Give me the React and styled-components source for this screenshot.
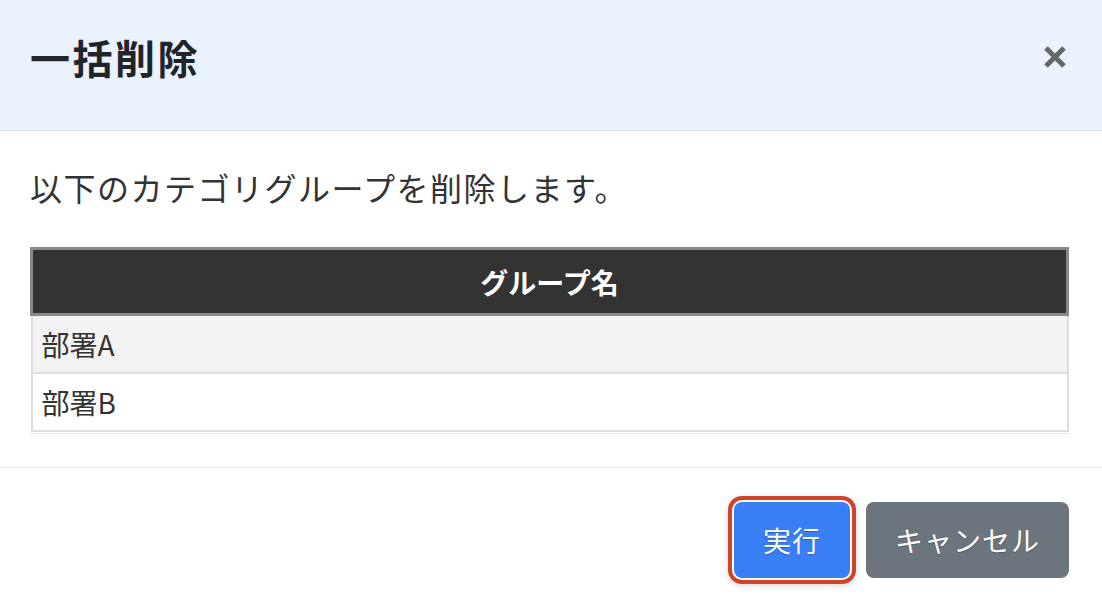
import React from "react";
import styled, { createGlobalStyle } from "styled-components";

const Global = createGlobalStyle`
  html, body { margin: 0; padding: 0; background: #fff; }
  body { font-family: "Noto Sans CJK JP", "Noto Sans", sans-serif; color: #212529; }
  * { box-sizing: border-box; }
`;

const Modal = styled.div`
  width: 1102px;
  height: 610px;
  display: flex;
  flex-direction: column;
  background: #fff;
  overflow: hidden;
`;

const Header = styled.header`
  flex-shrink: 0;
  height: 131px;
  display: flex;
  align-items: center;
  justify-content: space-between;
  padding: 0 30px 16px 30px;
  background: #eaf2fd;
  border-bottom: 1px solid #dfe5ec;
`;

const Title = styled.h5`
  margin: 0;
  font-size: 40px;
  font-weight: 700;
  letter-spacing: 2.5px;
  color: #212529;
  line-height: 1.2;
`;

const Close = styled.button`
  border: none;
  background: transparent;
  padding: 0;
  width: 30px;
  height: 30px;
  margin-right: 2px;
  display: flex;
  align-items: center;
  justify-content: center;
  cursor: pointer;
`;

const Body = styled.div`
  flex-shrink: 0;
  padding: 32px 33px 33px 30px;
`;

const Lead = styled.p`
  margin: 0 0 36px 0;
  font-size: 32px;
  line-height: 48px;
  letter-spacing: 1.5px;
  color: #333;
`;

const Table = styled.table`
  width: 1039px;
  border-collapse: collapse;
  font-size: 28px;
`;

const Th = styled.th`
  height: 66px;
  background: #333;
  color: #fff;
  font-weight: 700;
  text-align: center;
  border: 3px solid #888;
  padding: 0;
`;

const Td = styled.td`
  height: ${(p) => p.$h}px;
  background: ${(p) => (p.$alt ? "#f2f2f2" : "#fff")};
  border: 2px solid #dedede;
  padding: 0 9px;
  color: #333;
`;

const TableEnd = styled.div`
  width: 1039px;
  height: 1px;
  margin-top: 1px;
  background: #e6e6e6;
`;

const Footer = styled.footer`
  flex-shrink: 0;
  display: flex;
  justify-content: flex-end;
  align-items: flex-start;
  gap: 16px;
  padding: 34px 33px 32px 0;
  border-top: 1px solid #e5e7ea;
`;

const Button = styled.button`
  height: 76px;
  padding: 0 29px;
  border: none;
  border-radius: 8px;
  font-family: inherit;
  font-size: 28px;
  letter-spacing: 1px;
  color: #fff;
  text-shadow: 0 1px 1px rgba(0, 0, 0, 0.25);
  background: ${(p) => (p.$primary ? "#3a7ff6" : "#6c757d")};
  box-shadow: ${(p) =>
    p.$focus ? "0 0 0 2px #fff, 0 0 0 6px #d0432a, 0 2px 6px 6px rgba(0,0,0,0.15)" : "none"};
  cursor: pointer;
`;

export default function App() {
  return (
    <>
      <Global />
      <Modal>
        <Header>
          <Title>一括削除</Title>
          <Close aria-label="close">
            <svg width="24" height="24" viewBox="0 0 24 24">
              <path d="M3 3 L21 21 M21 3 L3 21" stroke="#666" strokeWidth="5" strokeLinecap="butt" />
            </svg>
          </Close>
        </Header>
        <Body>
          <Lead>以下のカテゴリグループを削除します。</Lead>
          <Table>
            <thead>
              <tr>
                <Th>グループ名</Th>
              </tr>
            </thead>
            <tbody>
              <tr>
                <Td $alt $h={58}>部署A</Td>
              </tr>
              <tr>
                <Td $h={58}>部署B</Td>
              </tr>
            </tbody>
          </Table>
          <TableEnd />
        </Body>
        <Footer>
          <Button $primary $focus>実行</Button>
          <Button>キャンセル</Button>
        </Footer>
      </Modal>
    </>
  );
}
